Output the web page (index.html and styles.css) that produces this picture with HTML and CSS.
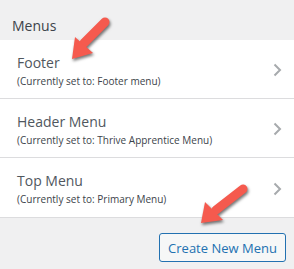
FILE: index.html
```html
<!DOCTYPE html>
<html lang="en">
<head>
    <meta charset="UTF-8">
    <meta name="viewport" content="width=device-width, initial-scale=1.0">
    <title>Menus</title>
    <link rel="stylesheet" href="styles.css">
</head>
<body>
    <div class="panel">
        <div class="panel-title">Menus</div>

        <!-- menu locations -->
        <ul class="menu-list">
            <li class="menu-item">
                <div class="menu-text">
                    <div class="menu-name">Footer</div>
                    <div class="menu-sub">(Currently set to: Footer menu)</div>
                </div>
                <svg class="chevron" width="9" height="14" viewBox="0 0 9 14"><polyline points="1.5,1.5 7,7 1.5,12.5" /></svg>
            </li>
            <li class="menu-item">
                <div class="menu-text">
                    <div class="menu-name">Header Menu</div>
                    <div class="menu-sub">(Currently set to: Thrive Apprentice Menu)</div>
                </div>
                <svg class="chevron" width="9" height="14" viewBox="0 0 9 14"><polyline points="1.5,1.5 7,7 1.5,12.5" /></svg>
            </li>
            <li class="menu-item">
                <div class="menu-text">
                    <div class="menu-name">Top Menu</div>
                    <div class="menu-sub">(Currently set to: Primary Menu)</div>
                </div>
                <svg class="chevron" width="9" height="14" viewBox="0 0 9 14"><polyline points="1.5,1.5 7,7 1.5,12.5" /></svg>
            </li>
        </ul>

        <div class="panel-footer">
            <button class="btn">Create New Menu</button>
        </div>

        <!-- annotation arrows -->
        <svg class="arrow arrow-top" width="50" height="50" viewBox="0 0 50 50">
            <path d="M41 7 L20 28" class="shaft" />
            <polygon points="8,44 11,22 29,38" />
        </svg>
        <svg class="arrow arrow-bottom" width="60" height="50" viewBox="0 0 60 50">
            <path d="M51 8 L24 29" class="shaft" />
            <polygon points="9,42 13,21 31,39" />
        </svg>
    </div>
</body>
</html>
```

FILE: styles.css
```css
* {
    margin: 0;
    padding: 0;
    box-sizing: border-box;
    font-family: "Open Sans", "Noto Sans", sans-serif;
}

body {
    background: #f0f0f1;
    width: 294px;
    height: 269px;
    overflow: hidden;
}

.panel {
    position: relative;
}

.panel-title {
    height: 40px;
    padding: 16px 0 0 12px;
    font-size: 14px;
    color: #3c434a;
}

.menu-list {
    list-style: none;
    background: white;
    border-bottom: 1px solid #dcdcde;
}

.menu-item {
    display: flex;
    align-items: center;
    justify-content: space-between;
    height: 59px;
    padding: 2px 12px 0 17px;
    border-bottom: 1px solid #dcdcde;
}

.menu-item:last-child {
    border-bottom: none;
}

.menu-name {
    font-size: 14px;
    color: #50575e;
    line-height: 20px;
}

.menu-sub {
    font-size: 10px;
    color: #3c434a;
    line-height: 14px;
    margin-top: 1px;
}

.chevron {
    fill: none;
    stroke: #a7aaad;
    stroke-width: 2;
}

.panel-footer {
    display: flex;
    justify-content: flex-end;
    padding: 15px 8px 0 0;
}

.btn {
    width: 127px;
    height: 29px;
    background: #f6f7f7;
    border: 1px solid #2271b1;
    border-radius: 3px;
    color: #2271b1;
    font-size: 13px;
    cursor: pointer;
}

.arrow {
    position: absolute;
    fill: #f55a4e;
    filter: drop-shadow(1px 2px 1.5px rgba(0, 0, 0, 0.55));
}

.arrow .shaft {
    fill: none;
    stroke: #f55a4e;
    stroke-width: 9;
    stroke-linecap: round;
}

.arrow-top {
    left: 64px;
    top: 15px;
}

.arrow-bottom {
    left: 192px;
    top: 181px;
}
```
